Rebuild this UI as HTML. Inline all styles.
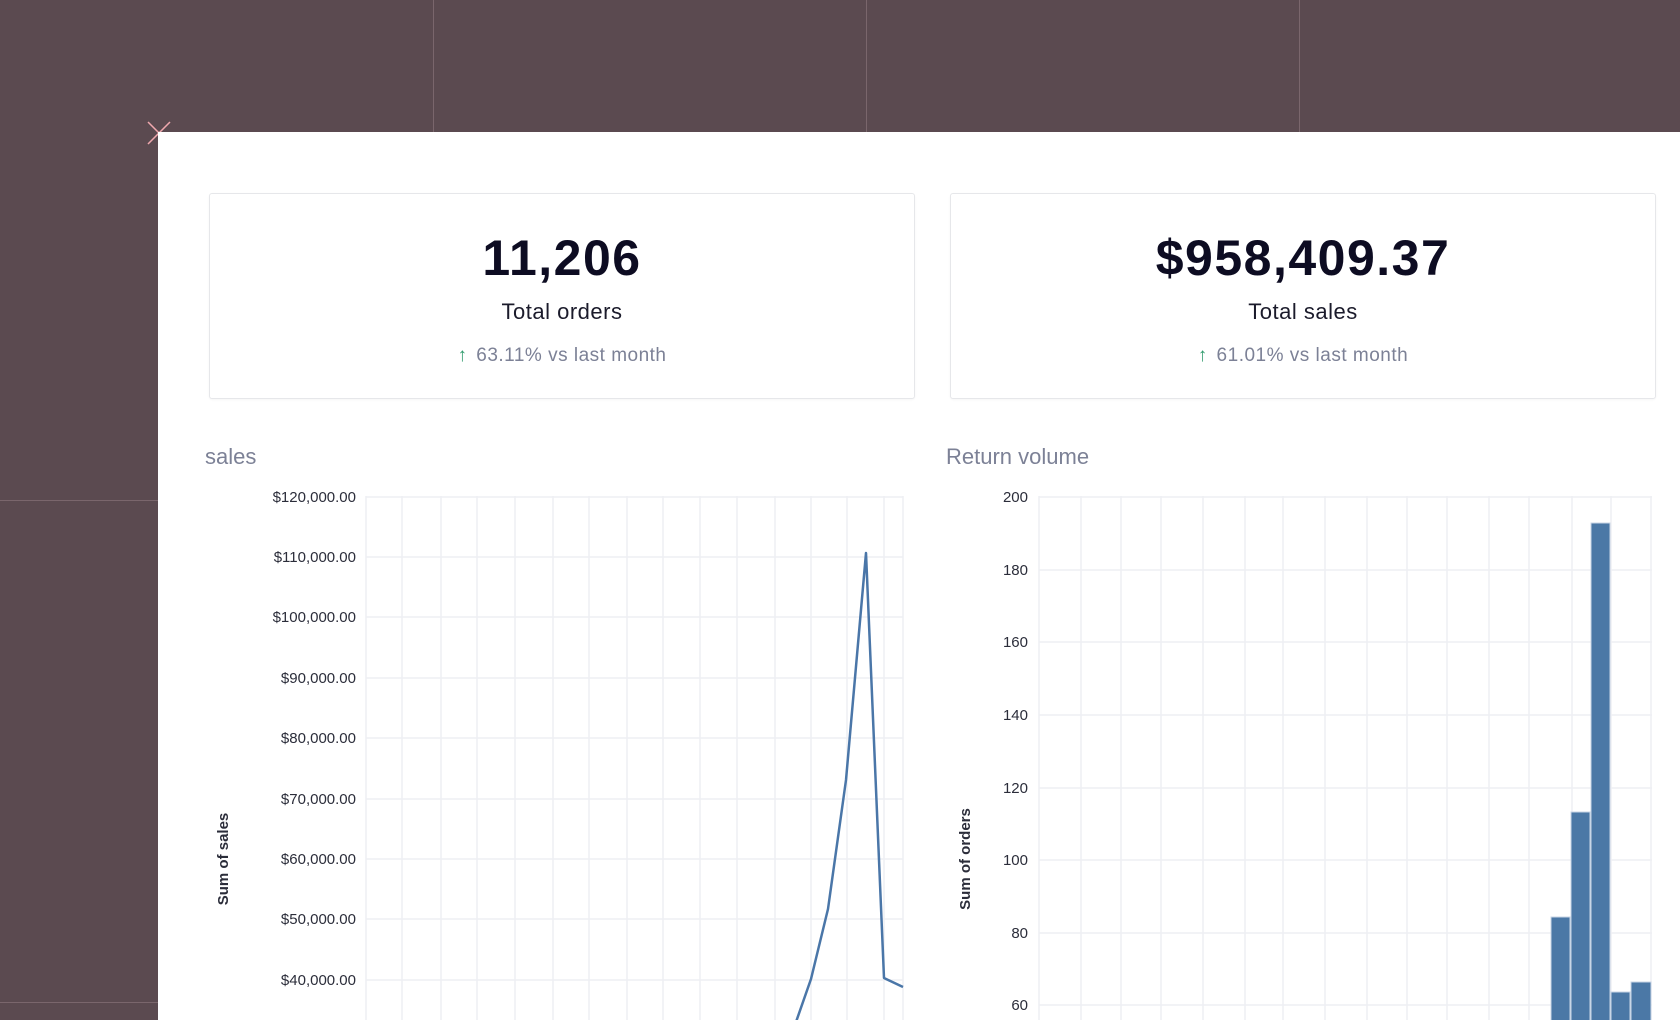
<!DOCTYPE html>
<html><head><meta charset="utf-8"><style>
*{margin:0;padding:0;box-sizing:border-box}
body{width:1680px;height:1020px;overflow:hidden;background:#5b4a50;position:relative;font-family:"Liberation Sans",sans-serif}
.vl{position:absolute;top:0;width:1px;height:132px;background:#7a666c}
.hl{position:absolute;left:0;width:158px;height:1px;background:#7a666c}
.panel{position:absolute;left:158px;top:132px;width:1522px;height:888px;background:#fff}
.card{position:absolute;top:193px;width:706px;height:206px;border:1px solid #e6e7ea;border-radius:3px;background:#fff;box-shadow:0 1px 2px rgba(0,0,0,.04);text-align:center}
.big{position:absolute;left:0;right:0;top:35px;font-size:50px;font-weight:bold;color:#0d0c22;letter-spacing:1.5px}
.lab{position:absolute;left:0;right:0;top:105px;font-size:22px;color:#1b1b2b;letter-spacing:0.5px}
.st{position:absolute;left:0;right:0;top:151px;font-size:19px;color:#7c8196;letter-spacing:0.5px}
.st b{color:#2f9a6c;font-weight:bold;margin-right:3px}
.ttl{position:absolute;font-size:22px;color:#7c8196}
</style></head><body>
<div class="vl" style="left:433px"></div>
<div class="vl" style="left:866px"></div>
<div class="vl" style="left:1299px"></div>
<div class="hl" style="top:500px"></div>
<div class="hl" style="top:1002px"></div>
<svg style="position:absolute;left:146px;top:120px" width="26" height="26"><path d="M2 2L24 24M24 2L2 24" stroke="#f0a8ae" stroke-width="1.5"/></svg>
<div class="panel"></div>
<div class="card" style="left:209px"><div class="big">11,206</div><div class="lab">Total orders</div><div class="st"><b>↑</b> 63.11% vs last month</div></div>
<div class="card" style="left:950px"><div class="big">$958,409.37</div><div class="lab">Total sales</div><div class="st"><b>↑</b> 61.01% vs last month</div></div>
<div class="ttl" style="left:205px;top:444px">sales</div>
<div class="ttl" style="left:946px;top:444px">Return volume</div>
<svg style="position:absolute;left:0;top:0" width="1680" height="1020" font-family="Liberation Sans, sans-serif">
<g stroke="#eeeff3" stroke-width="1.5">
<path d="M366 496V1020M402 496V1020M441 496V1020M477 496V1020M515 496V1020M553 496V1020M589 496V1020M627 496V1020M663 496V1020M700 496V1020M737 496V1020M775 496V1020M811 496V1020M847 496V1020M884 496V1020M903 496V1020"/>
<path d="M366 497H903M366 557H903M366 617H903M366 678H903M366 738H903M366 799H903M366 859H903M366 919H903M366 980H903"/>
<path d="M1039 496V1020M1081 496V1020M1121 496V1020M1161 496V1020M1203 496V1020M1245 496V1020M1283 496V1020M1325 496V1020M1367 496V1020M1407 496V1020M1447 496V1020M1489 496V1020M1529 496V1020M1572 496V1020M1611 496V1020M1651 496V1020"/>
<path d="M1039 497H1652M1039 570H1652M1039 642H1652M1039 715H1652M1039 788H1652M1039 860H1652M1039 933H1652M1039 1005H1652"/>
</g>
<g font-size="15" fill="#2b2d3a" text-anchor="end">
<text x="356" y="502">$120,000.00</text><text x="356" y="562">$110,000.00</text><text x="356" y="622">$100,000.00</text><text x="356" y="683">$90,000.00</text><text x="356" y="743">$80,000.00</text><text x="356" y="804">$70,000.00</text><text x="356" y="864">$60,000.00</text><text x="356" y="924">$50,000.00</text><text x="356" y="985">$40,000.00</text>
<text x="1028" y="502">200</text><text x="1028" y="575">180</text><text x="1028" y="647">160</text><text x="1028" y="720">140</text><text x="1028" y="793">120</text><text x="1028" y="865">100</text><text x="1028" y="938">80</text><text x="1028" y="1010">60</text>
</g>
<text transform="translate(228 859) rotate(-90)" font-size="15" font-weight="bold" fill="#2b2d3a" text-anchor="middle">Sum of sales</text>
<text transform="translate(970 859) rotate(-90)" font-size="15" font-weight="bold" fill="#2b2d3a" text-anchor="middle">Sum of orders</text>
<polyline points="796,1022 811,979 828,909 846,780 866,553 884,978 903,987" fill="none" stroke="#4a76a8" stroke-width="2.5" stroke-linejoin="round"/>
<g fill="#4b78a6" stroke="#c9d6e6" stroke-width="1">
<rect x="1551" y="917" width="19" height="110"/>
<rect x="1571" y="812" width="19" height="215"/>
<rect x="1591" y="523" width="19" height="504"/>
<rect x="1611" y="992" width="19" height="35"/>
<rect x="1631" y="982" width="20" height="45"/>
</g>
</svg>
</body></html>
